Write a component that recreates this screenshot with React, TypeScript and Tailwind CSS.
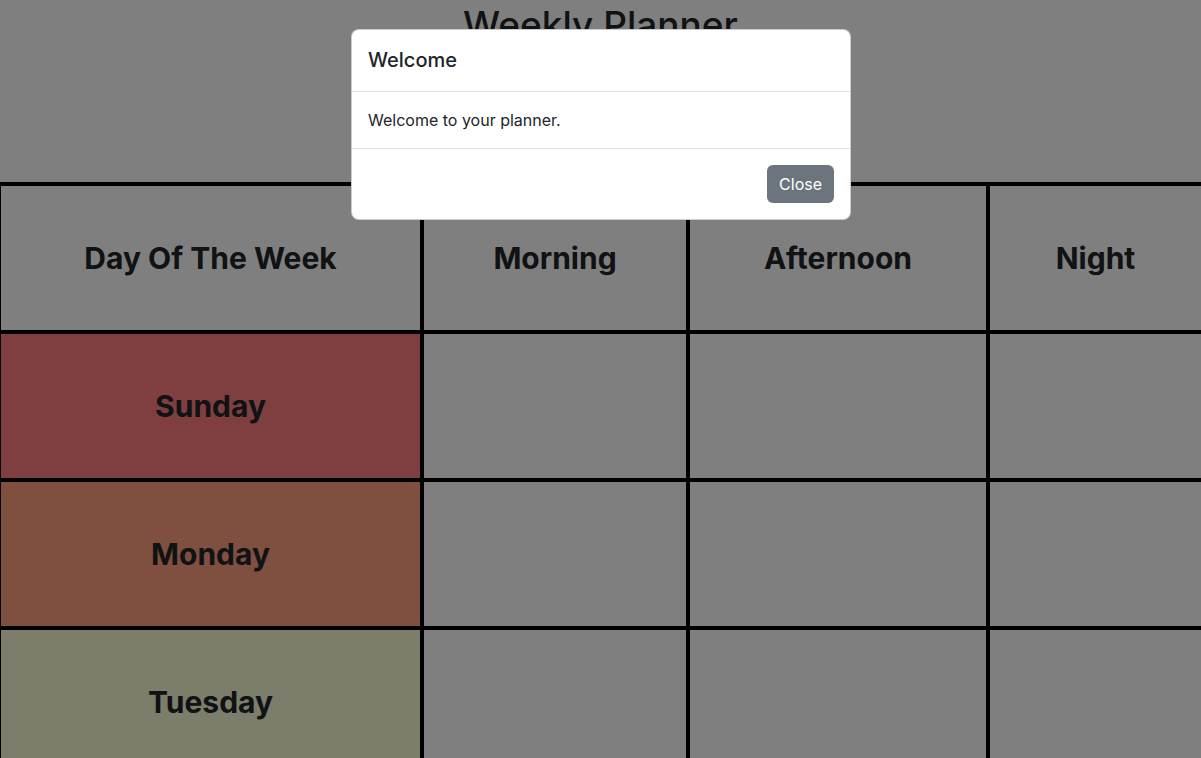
import React from 'react';

const days = [
  { name: 'Sunday', color: 'bg-[#ff7e82]' },
  { name: 'Monday', color: 'bg-[#ff9f81]' },
  { name: 'Tuesday', color: 'bg-[#fbfad6]' },
];

export default function App() {
  return (
    <div className="relative h-[758px] overflow-hidden bg-white font-['Inter',sans-serif] text-[#212529]">
      {/* Planner */}
      <div className="h-[182px]">
        <h1 className="pt-px text-center text-[37px] leading-[48px] font-medium">Weekly Planner</h1>
      </div>
      <div className="grid grid-cols-[419px_262px_296px_1fr] gap-1 bg-black pt-1 pl-px">
        {['Day Of The Week', 'Morning', 'Afternoon', 'Night'].map((h) => (
          <div key={h} className="flex h-[144px] items-center justify-center bg-white text-[30px] font-bold">
            {h}
          </div>
        ))}
        {days.map((d) => (
          <React.Fragment key={d.name}>
            <div className={`flex h-[144px] items-center justify-center text-[30px] font-bold ${d.color}`}>
              {d.name}
            </div>
            <div className="bg-white" />
            <div className="bg-white" />
            <div className="bg-white" />
          </React.Fragment>
        ))}
      </div>

      {/* Backdrop */}
      <div className="absolute inset-0 bg-black/50" />

      {/* Modal */}
      <div className="absolute left-[351px] top-[29px] w-[500px] overflow-hidden rounded-lg border border-black/20 bg-white">
        <div className="border-b border-[#dee2e6] px-4 py-4">
          <h5 className="text-[20px] leading-[29px] font-medium">Welcome</h5>
        </div>
        <div className="border-b border-[#dee2e6] p-4 text-[16px] leading-6">Welcome to your planner.</div>
        <div className="flex justify-end p-4">
          <button className="h-[38px] rounded-md bg-[#6c757d] px-3 text-[16px] text-white">Close</button>
        </div>
      </div>
    </div>
  );
}
